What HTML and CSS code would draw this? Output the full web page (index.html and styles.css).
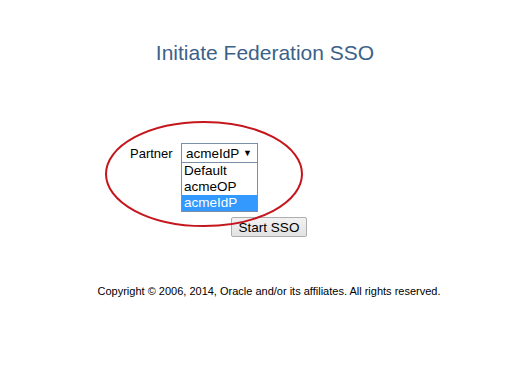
FILE: index.html
```html
<!DOCTYPE html>
<html lang="en">
<head>
  <meta charset="UTF-8" />
  <title>Initiate Federation SSO</title>
  <link rel="stylesheet" href="styles.css">
</head>
<body>
  <div class="page">
    <h1 class="title">Initiate Federation SSO</h1>

    <form class="sso-form" onsubmit="return false">
      <div class="row">
        <label class="label">Partner</label>
        <div class="picker">
          <div class="select"><span>acmeIdP</span><span class="arrow">&#9660;</span></div>
          <ul class="options">
            <li>Default</li>
            <li>acmeOP</li>
            <li class="selected">acmeIdP</li>
          </ul>
        </div>
      </div>
      <div class="row actions">
        <button class="btn" type="submit">Start SSO</button>
      </div>
    </form>

    <p class="copyright">Copyright &copy; 2006, 2014, Oracle and/or its affiliates. All rights reserved.</p>

    <svg class="mark" width="202" height="108" viewBox="0 0 202 108">
      <ellipse cx="101" cy="54" rx="98" ry="52" fill="none" stroke="#c4161c" stroke-width="2"/>
    </svg>
  </div>
</body>
</html>
```

FILE: styles.css
```css
body {
  margin: 0;
  background: #fff;
  font-family: 'Liberation Sans', Arial, sans-serif;
  color: #000;
}

.page {
  position: relative;
  width: 526px;
  height: 383px;
}

.title {
  margin: 0;
  padding-top: 41px;
  text-align: center;
  font-size: 21px;
  font-weight: normal;
  line-height: 24px;
  color: #3b6189;
  padding-left: 4px;
}

.sso-form {
  margin-top: 78px;
  padding-left: 130px;
}

.row {
  display: flex;
  align-items: center;
}

.label {
  font-size: 13px;
  width: 51px;
}

.picker {
  position: relative;
}

.select {
  box-sizing: border-box;
  display: flex;
  justify-content: space-between;
  align-items: center;
  width: 77px;
  height: 20px;
  border: 1px solid #7a8ea8;
  font-size: 13.5px;
  padding: 0 5px 0 4px;
  background: #fff;
  white-space: nowrap;
}

.arrow {
  font-size: 9px;
}

.options {
  position: absolute;
  top: 20px;
  left: 0;
  box-sizing: border-box;
  width: 77px;
  margin: 0;
  padding: 0;
  list-style: none;
  border: 1px solid #7a8ea8;
  border-top: none;
  background: #fff;
  z-index: 2;
}

.options li {
  font-size: 13.5px;
  line-height: 16px;
  padding-left: 2px;
}

.options li.selected {
  background: #3399ff;
  color: #fff;
}

.actions {
  margin-top: 54px;
  padding-left: 101px;
}

.btn {
  box-sizing: border-box;
  width: 76px;
  height: 20px;
  padding: 0;
  font-family: inherit;
  font-size: 13.5px;
  border: 1px solid #adadad;
  border-radius: 2px;
  background: linear-gradient(#f2f2f2, #e2e2e2);
  color: #000;
}

.copyright {
  margin: 48px 0 0;
  text-align: center;
  font-size: 11px;
  padding-left: 12px;
}

.mark {
  position: absolute;
  left: 103px;
  top: 120px;
  z-index: 3;
}
```
